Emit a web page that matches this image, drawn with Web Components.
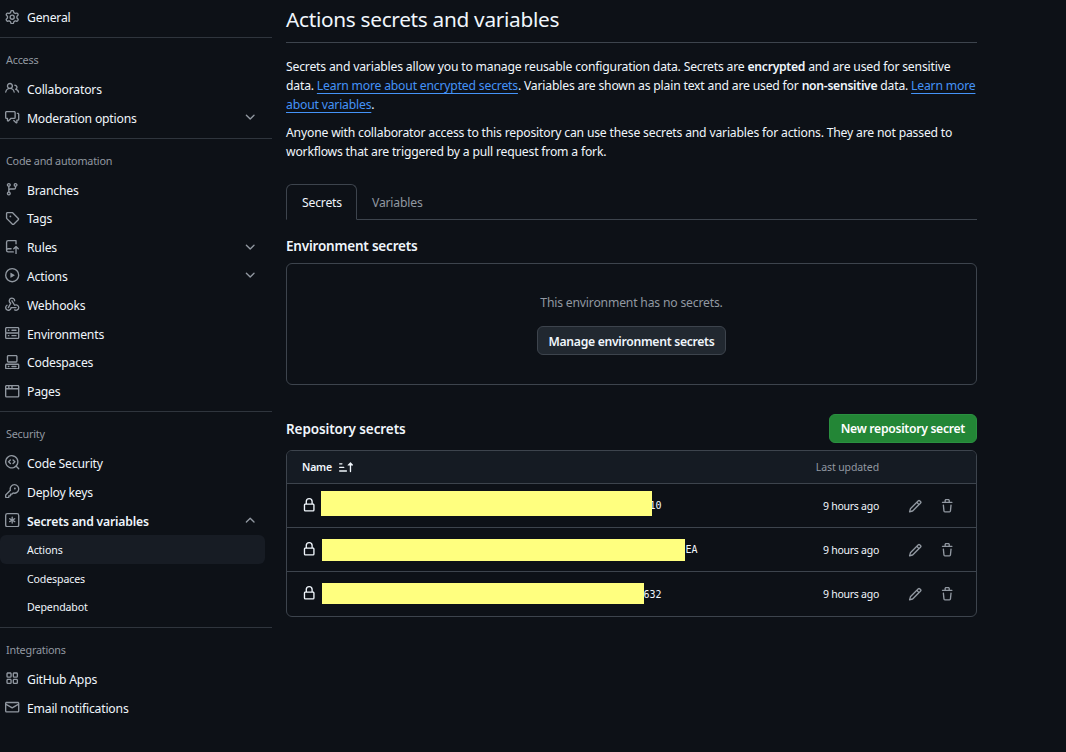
<!DOCTYPE html>
<html lang="en"><head><meta charset="utf-8"><title>Actions secrets and variables</title>
<style>
html,body{margin:0;padding:0;background:#0d1117;color:#f0f6fc;font-family:"Noto Sans","Liberation Sans",sans-serif;font-size:12.2px}
body{overflow:hidden}
</style></head><body>
<settings-page>
  <settings-nav slot="nav">
    <nav-item icon="gear">General</nav-item>
    <nav-heading>Access</nav-heading>
    <nav-item icon="people">Collaborators</nav-item>
    <nav-item icon="comment" chevron="down">Moderation options</nav-item>
    <nav-heading>Code and automation</nav-heading>
    <nav-item icon="branch">Branches</nav-item>
    <nav-item icon="tag">Tags</nav-item>
    <nav-item icon="push" chevron="down">Rules</nav-item>
    <nav-item icon="play" chevron="down">Actions</nav-item>
    <nav-item icon="webhook">Webhooks</nav-item>
    <nav-item icon="server">Environments</nav-item>
    <nav-item icon="codespaces">Codespaces</nav-item>
    <nav-item icon="browser">Pages</nav-item>
    <nav-heading>Security</nav-heading>
    <nav-item icon="codescan">Code Security</nav-item>
    <nav-item icon="key">Deploy keys</nav-item>
    <nav-item icon="asterisk" chevron="up" strong>Secrets and variables</nav-item>
    <nav-item sub active>Actions</nav-item>
    <nav-item sub>Codespaces</nav-item>
    <nav-item sub>Dependabot</nav-item>
    <nav-heading>Integrations</nav-heading>
    <nav-item icon="apps">GitHub Apps</nav-item>
    <nav-item icon="mail">Email notifications</nav-item>
  </settings-nav>
  <secrets-intro></secrets-intro>
  <tab-strip></tab-strip>
  <env-secrets></env-secrets>
  <repo-secrets>
    <secret-row width="331" height="25" offset="7" mono="10" gap="5" pull="3" lift="0"></secret-row>
    <secret-row width="363" height="22" offset="11" mono="EA" gap="6" pull="0" lift="0"></secret-row>
    <secret-row width="322" height="21" offset="11" mono="632" gap="6" pull="1" lift="2"></secret-row>
  </repo-secrets>
</settings-page>
<script>
const ICONS={
gear:'M8 0a8.2 8.2 0 0 1 .701.031C9.444.095 9.99.645 10.16 1.29l.288 1.107c.018.066.079.158.212.224.231.114.454.243.668.386.123.082.233.09.299.071l1.103-.303c.644-.176 1.392.021 1.82.63.27.385.506.792.704 1.218.315.675.111 1.422-.364 1.891l-.814.806c-.049.048-.098.147-.088.294.016.257.016.515 0 .772-.01.147.038.246.088.294l.814.806c.475.469.679 1.216.364 1.891a7.977 7.977 0 0 1-.704 1.217c-.428.61-1.176.807-1.82.63l-1.102-.302c-.067-.019-.177-.011-.3.071a5.909 5.909 0 0 1-.668.386c-.133.066-.194.158-.211.224l-.29 1.106c-.168.646-.715 1.196-1.458 1.26a8.006 8.006 0 0 1-1.402 0c-.743-.064-1.289-.614-1.458-1.26l-.289-1.106c-.018-.066-.079-.158-.212-.224a5.738 5.738 0 0 1-.668-.386c-.123-.082-.233-.09-.299-.071l-1.103.303c-.644.176-1.392-.021-1.82-.63a8.12 8.12 0 0 1-.704-1.218c-.315-.675-.111-1.422.363-1.891l.815-.806c.05-.048.098-.147.088-.294a6.214 6.214 0 0 1 0-.772c.01-.147-.038-.246-.088-.294l-.815-.806C.635 6.045.431 5.298.746 4.623a7.92 7.92 0 0 1 .704-1.217c.428-.61 1.176-.807 1.82-.63l1.102.302c.067.019.177.011.3-.071.214-.143.437-.272.668-.386.133-.066.194-.158.211-.224l.29-1.106C6.009.645 6.556.095 7.299.03 7.53.01 7.764 0 8 0Zm-.571 1.525c-.036.003-.108.036-.137.146l-.289 1.105c-.147.561-.549.967-.998 1.189-.173.086-.34.183-.5.29-.417.278-.97.423-1.529.27l-1.103-.303c-.109-.03-.175.016-.195.045-.22.312-.412.644-.573.99-.014.031-.021.11.059.19l.815.806c.411.406.562.957.53 1.456a4.709 4.709 0 0 0 0 .582c.032.499-.119 1.05-.53 1.456l-.815.806c-.081.08-.073.159-.059.19.162.346.353.677.573.989.02.03.085.076.195.046l1.102-.303c.56-.153 1.113-.008 1.53.27.161.107.328.204.501.29.447.222.85.629.997 1.189l.289 1.105c.029.109.101.143.137.146a6.6 6.6 0 0 0 1.142 0c.036-.003.108-.036.137-.146l.289-1.105c.147-.561.549-.967.998-1.189.173-.086.34-.183.5-.29.417-.278.97-.423 1.529-.27l1.103.303c.109.029.175-.016.195-.045.22-.313.411-.644.573-.99.014-.031.021-.11-.059-.19l-.815-.806c-.411-.406-.562-.957-.53-1.456a4.709 4.709 0 0 0 0-.582c-.032-.499.119-1.05.53-1.456l.815-.806c.081-.08.073-.159.059-.19a6.464 6.464 0 0 0-.573-.989c-.02-.03-.085-.076-.195-.046l-1.102.303c-.56.153-1.113.008-1.53-.27a4.44 4.44 0 0 0-.501-.29c-.447-.222-.85-.629-.997-1.189l-.289-1.105c-.029-.11-.101-.143-.137-.146a6.6 6.6 0 0 0-1.142 0ZM11 8a3 3 0 1 1-6 0 3 3 0 0 1 6 0ZM9.5 8a1.5 1.5 0 1 0-3.001.001A1.5 1.5 0 0 0 9.5 8Z',
people:'M2 5.5a3.5 3.5 0 1 1 5.898 2.549 5.508 5.508 0 0 1 3.034 4.084.75.75 0 1 1-1.482.235 4 4 0 0 0-7.9 0 .75.75 0 0 1-1.482-.236A5.507 5.507 0 0 1 3.102 8.05 3.493 3.493 0 0 1 2 5.5ZM11 4a3.001 3.001 0 0 1 2.22 5.018 5.01 5.01 0 0 1 2.56 3.012.749.749 0 0 1-.885.954.752.752 0 0 1-.549-.514 3.507 3.507 0 0 0-2.522-2.372.75.75 0 0 1-.574-.73v-.352a.75.75 0 0 1 .416-.672A1.5 1.5 0 0 0 11 5.5.75.75 0 0 1 11 4Zm-5.5-.5a2 2 0 1 0-.001 3.999A2 2 0 0 0 5.5 3.5Z',
comment:'M1.75 1h8.5c.966 0 1.75.784 1.75 1.75v5.5A1.75 1.75 0 0 1 10.25 10H7.061l-2.574 2.573A1.458 1.458 0 0 1 2 11.543V10h-.25A1.75 1.75 0 0 1 0 8.25v-5.5C0 1.784.784 1 1.75 1ZM1.5 2.75v5.5c0 .138.112.25.25.25h1a.75.75 0 0 1 .75.75v2.19l2.72-2.72a.749.749 0 0 1 .53-.22h3.5a.25.25 0 0 0 .25-.25v-5.5a.25.25 0 0 0-.25-.25h-8.5a.25.25 0 0 0-.25.25Zm13 2a.25.25 0 0 0-.25-.25h-.5a.75.75 0 0 1 0-1.5h.5c.966 0 1.75.784 1.75 1.75v5.5A1.75 1.75 0 0 1 14.25 12H14v1.543a1.458 1.458 0 0 1-2.487 1.03L9.22 12.28a.749.749 0 0 1 .326-1.275.749.749 0 0 1 .734.215l2.22 2.22v-2.19a.75.75 0 0 1 .75-.75h1a.25.25 0 0 0 .25-.25Z',
branch:'M9.5 3.25a2.25 2.25 0 1 1 3 2.122V6A2.5 2.5 0 0 1 10 8.5H6a1 1 0 0 0-1 1v1.128a2.251 2.251 0 1 1-1.5 0V5.372a2.25 2.25 0 1 1 1.5 0v1.836A2.493 2.493 0 0 1 6 7h4a1 1 0 0 0 1-1v-.628A2.25 2.25 0 0 1 9.5 3.25Zm-6 0a.75.75 0 1 0 1.5 0 .75.75 0 0 0-1.5 0Zm8.25-.75a.75.75 0 1 0 0 1.5.75.75 0 0 0 0-1.5ZM4.25 12a.75.75 0 1 0 0 1.5.75.75 0 0 0 0-1.5Z',
tag:'M1 7.775V2.75C1 1.784 1.784 1 2.75 1h5.025c.464 0 .91.184 1.238.513l6.25 6.25a1.75 1.75 0 0 1 0 2.474l-5.026 5.026a1.75 1.75 0 0 1-2.474 0l-6.25-6.25A1.752 1.752 0 0 1 1 7.775Zm1.5 0c0 .066.026.13.073.177l6.25 6.25a.25.25 0 0 0 .354 0l5.025-5.025a.25.25 0 0 0 0-.354l-6.25-6.25a.25.25 0 0 0-.177-.073H2.75a.25.25 0 0 0-.25.25ZM6 5a1 1 0 1 1 0 2 1 1 0 0 1 0-2Z',
push:'M1 2.5A2.5 2.5 0 0 1 3.5 0h8.75a.75.75 0 0 1 .75.75v3.5a.75.75 0 0 1-1.5 0V1.5h-8a1 1 0 0 0-1 1v6.708A2.492 2.492 0 0 1 3.5 9h3.25a.75.75 0 0 1 0 1.5H3.5a1 1 0 0 0 0 2h5.75a.75.75 0 0 1 0 1.5H3.5A2.5 2.5 0 0 1 1 11.5Zm13.23 7.79h-.001l-1.224-1.224v6.184a.75.75 0 0 1-1.5 0V9.066L10.28 10.29a.75.75 0 0 1-1.06-1.061l2.505-2.504a.75.75 0 0 1 1.06 0L15.29 9.23a.751.751 0 0 1-.018 1.042.751.751 0 0 1-1.042.018Z',
play:'M8 0a8 8 0 1 1 0 16A8 8 0 0 1 8 0ZM1.5 8a6.5 6.5 0 1 0 13 0 6.5 6.5 0 0 0-13 0Zm4.879-2.773 4.264 2.559a.25.25 0 0 1 0 .428l-4.264 2.559A.25.25 0 0 1 6 10.559V5.442a.25.25 0 0 1 .379-.215Z',
webhook:'M5.5 4.25a2.25 2.25 0 0 1 4.5 0 .75.75 0 0 0 1.5 0 3.75 3.75 0 1 0-6.14 2.889l-2.272 4.258a.75.75 0 0 0 1.324.706L7 7.25a.75.75 0 0 0-.309-1.015A2.25 2.25 0 0 1 5.5 4.25ZM7.364 3.607a.75.75 0 0 1 1.03.257l2.608 4.349a3.75 3.75 0 1 1-.628 6.785.75.75 0 0 1 .752-1.299 2.25 2.25 0 1 0-.033-3.88.75.75 0 0 1-1.03-.256L7.107 4.636a.75.75 0 0 1 .257-1.03ZM2.9 8.776A.75.75 0 0 1 2.625 9.8 2.25 2.25 0 1 0 6 11.75a.75.75 0 0 1 .75-.751h5.5a.75.75 0 0 1 0 1.5H7.425a3.751 3.751 0 1 1-5.55-3.998.75.75 0 0 1 1.024.274Z',
server:'M1.75 1h12.5c.966 0 1.75.784 1.75 1.75v4c0 .372-.116.717-.314 1 .198.283.314.628.314 1v4a1.75 1.75 0 0 1-1.75 1.75H1.75A1.75 1.75 0 0 1 0 12.75v-4c0-.372.116-.717.314-1a1.739 1.739 0 0 1-.314-1v-4C0 1.784.784 1 1.75 1ZM1.5 2.75v4c0 .138.112.25.25.25h12.5a.25.25 0 0 0 .25-.25v-4a.25.25 0 0 0-.25-.25H1.75a.25.25 0 0 0-.25.25Zm.25 5.75a.25.25 0 0 0-.25.25v4c0 .138.112.25.25.25h12.5a.25.25 0 0 0 .25-.25v-4a.25.25 0 0 0-.25-.25ZM7 4.75A.75.75 0 0 1 7.75 4h4.5a.75.75 0 0 1 0 1.5h-4.5A.75.75 0 0 1 7 4.75ZM7.75 10h4.5a.75.75 0 0 1 0 1.5h-4.5a.75.75 0 0 1 0-1.5ZM3 4.75A.75.75 0 0 1 3.75 4h.5a.75.75 0 0 1 0 1.5h-.5A.75.75 0 0 1 3 4.75ZM3.75 10h.5a.75.75 0 0 1 0 1.5h-.5a.75.75 0 0 1 0-1.5Z',
codespaces:'M0 11.25c0-.966.784-1.75 1.75-1.75h12.5c.966 0 1.75.784 1.75 1.75v3A1.75 1.75 0 0 1 14.25 16H1.75A1.75 1.75 0 0 1 0 14.25Zm2-9.5C2 .784 2.784 0 3.75 0h8.5C13.216 0 14 .784 14 1.75v5a1.75 1.75 0 0 1-1.75 1.75h-8.5A1.75 1.75 0 0 1 2 6.75Zm1.75-.25a.25.25 0 0 0-.25.25v5c0 .138.112.25.25.25h8.5a.25.25 0 0 0 .25-.25v-5a.25.25 0 0 0-.25-.25Zm-2 9.5a.25.25 0 0 0-.25.25v3c0 .138.112.25.25.25h12.5a.25.25 0 0 0 .25-.25v-3a.25.25 0 0 0-.25-.25ZM7 12.75a.75.75 0 0 1 .75-.75h4.5a.75.75 0 0 1 0 1.5h-4.5a.75.75 0 0 1-.75-.75Zm-4 0a.75.75 0 0 1 .75-.75h.5a.75.75 0 0 1 0 1.5h-.5a.75.75 0 0 1-.75-.75Z',
browser:'M0 2.75C0 1.784.784 1 1.75 1h12.5c.966 0 1.75.784 1.75 1.75v10.5A1.75 1.75 0 0 1 14.25 15H1.75A1.75 1.75 0 0 1 0 13.25ZM14.5 6h-13v7.25c0 .138.112.25.25.25h12.5a.25.25 0 0 0 .25-.25Zm-6-3.5v2h6V2.75a.25.25 0 0 0-.25-.25ZM5 2.5v2h2v-2Zm-3.25 0a.25.25 0 0 0-.25.25V4.5h2v-2Z',
codescan:'M8.47 4.97a.75.75 0 0 0 0 1.06L9.94 7.5 8.47 8.97a.75.75 0 1 0 1.06 1.06l2-2a.75.75 0 0 0 0-1.06l-2-2a.75.75 0 0 0-1.06 0ZM6.53 6.03a.75.75 0 0 0-1.06-1.06l-2 2a.75.75 0 0 0 0 1.06l2 2a.75.75 0 1 0 1.06-1.06L5.06 7.5l1.47-1.47ZM12.246 13.307a7.501 7.501 0 1 1 1.06-1.06l2.474 2.473a.749.749 0 0 1-.326 1.275.749.749 0 0 1-.734-.215ZM1.5 7.5a6.002 6.002 0 0 0 3.5 5.45 6 6 0 1 0-3.5-5.45Z',
key:'M10.5 0a5.499 5.499 0 1 1-1.288 10.848l-.932.932a.749.749 0 0 1-.53.22H7v.75a.749.749 0 0 1-.22.53l-.5.5a.749.749 0 0 1-.53.22H5v.75a.749.749 0 0 1-.22.53l-.5.5a.749.749 0 0 1-.53.22h-2A1.75 1.75 0 0 1 0 14.25v-2c0-.199.079-.389.22-.53l4.932-4.932A5.5 5.5 0 0 1 10.5 0Zm-4 5.5c-.001.431.069.86.205 1.269a.75.75 0 0 1-.181.768L1.5 12.56v1.69c0 .138.112.25.25.25h1.69l.06-.06v-1.19a.75.75 0 0 1 .75-.75h1.19l.06-.06v-1.19a.75.75 0 0 1 .75-.75h1.19l1.023-1.025a.75.75 0 0 1 .768-.18A4 4 0 1 0 6.5 5.5ZM11 6a1 1 0 1 1 0-2 1 1 0 0 1 0 2Z',
asterisk:'M0 2.75A2.75 2.75 0 0 1 2.75 0h10.5A2.75 2.75 0 0 1 16 2.75v10.5A2.75 2.75 0 0 1 13.25 16H2.75A2.75 2.75 0 0 1 0 13.25ZM2.75 1.5c-.69 0-1.25.56-1.25 1.25v10.5c0 .69.56 1.25 1.25 1.25h10.5c.69 0 1.25-.56 1.25-1.25V2.75c0-.69-.56-1.25-1.25-1.25ZM8 4a.75.75 0 0 1 .75.75V6.7l1.69-.975a.75.75 0 0 1 .75 1.3L9.5 8l1.69.976a.75.75 0 0 1-.75 1.298L8.75 9.3v1.951a.75.75 0 0 1-1.5 0V9.299l-1.69.976a.75.75 0 0 1-.75-1.3L6.5 8l-1.69-.975a.75.75 0 0 1 .75-1.3l1.69.976V4.75A.75.75 0 0 1 8 4Z',
apps:'M1.5 3.25c0-.966.784-1.75 1.75-1.75h2.5c.966 0 1.75.784 1.75 1.75v2.5A1.75 1.75 0 0 1 5.75 7.5h-2.5A1.75 1.75 0 0 1 1.5 5.75Zm7 0c0-.966.784-1.75 1.75-1.75h2.5c.966 0 1.75.784 1.75 1.75v2.5a1.75 1.75 0 0 1-1.75 1.75h-2.5A1.75 1.75 0 0 1 8.5 5.75Zm-7 7c0-.966.784-1.75 1.75-1.75h2.5c.966 0 1.75.784 1.75 1.75v2.5a1.75 1.75 0 0 1-1.75 1.75h-2.5a1.75 1.75 0 0 1-1.75-1.75Zm7 0c0-.966.784-1.75 1.75-1.75h2.5c.966 0 1.75.784 1.75 1.75v2.5a1.75 1.75 0 0 1-1.75 1.75h-2.5a1.75 1.75 0 0 1-1.75-1.75ZM3.25 3a.25.25 0 0 0-.25.25v2.5c0 .138.112.25.25.25h2.5A.25.25 0 0 0 6 5.75v-2.5A.25.25 0 0 0 5.75 3Zm7 0a.25.25 0 0 0-.25.25v2.5c0 .138.112.25.25.25h2.5a.25.25 0 0 0 .25-.25v-2.5a.25.25 0 0 0-.25-.25ZM3 10.25v2.5c0 .138.112.25.25.25h2.5a.25.25 0 0 0 .25-.25v-2.5a.25.25 0 0 0-.25-.25h-2.5a.25.25 0 0 0-.25.25Zm7.25-.25a.25.25 0 0 0-.25.25v2.5c0 .138.112.25.25.25h2.5a.25.25 0 0 0 .25-.25v-2.5a.25.25 0 0 0-.25-.25Z',
mail:'M1.75 2h12.5c.966 0 1.75.784 1.75 1.75v8.5A1.75 1.75 0 0 1 14.25 14H1.75A1.75 1.75 0 0 1 0 12.25v-8.5C0 2.784.784 2 1.75 2ZM1.5 12.251c0 .138.112.25.25.25h12.5a.25.25 0 0 0 .25-.25V5.809L8.38 9.397a.75.75 0 0 1-.76 0L1.5 5.809v6.442Zm13-8.181v-.32a.25.25 0 0 0-.25-.25H1.75a.25.25 0 0 0-.25.25v.32L8 7.88Z',
down:'M12.78 5.22a.749.749 0 0 1 0 1.06l-4.25 4.25a.749.749 0 0 1-1.06 0L3.22 6.28a.749.749 0 1 1 1.06-1.06L8 8.939l3.72-3.719a.749.749 0 0 1 1.06 0Z',
up:'M3.22 10.53a.749.749 0 0 1 0-1.06l4.25-4.25a.749.749 0 0 1 1.06 0l4.25 4.25a.749.749 0 1 1-1.06 1.06L8 6.811 4.28 10.53a.749.749 0 0 1-1.06 0Z',
lock:'M4 4a4 4 0 0 1 8 0v2h.25c.966 0 1.75.784 1.75 1.75v5.5A1.75 1.75 0 0 1 12.25 15h-8.5A1.75 1.75 0 0 1 2 13.25v-5.5C2 6.784 2.784 6 3.75 6H4Zm8.25 3.5h-8.5a.25.25 0 0 0-.25.25v5.5c0 .138.112.25.25.25h8.5a.25.25 0 0 0 .25-.25v-5.5a.25.25 0 0 0-.25-.25ZM10.5 6V4a2.5 2.5 0 1 0-5 0v2Z',
pencil:'M11.013 1.427a1.75 1.75 0 0 1 2.474 0l1.086 1.086a1.75 1.75 0 0 1 0 2.474l-8.61 8.61c-.21.21-.47.364-.756.445l-3.251.93a.75.75 0 0 1-.927-.928l.929-3.25c.081-.286.235-.547.445-.758l8.61-8.61Zm.176 4.823L9.75 4.81l-6.286 6.287a.253.253 0 0 0-.064.108l-.558 1.953 1.953-.558a.253.253 0 0 0 .108-.064Zm1.238-3.763a.25.25 0 0 0-.354 0L10.811 3.75l1.439 1.44 1.263-1.263a.25.25 0 0 0 0-.354Z',
trash:'M11 1.75V3h2.25a.75.75 0 0 1 0 1.5H2.75a.75.75 0 0 1 0-1.5H5V1.75C5 .784 5.784 0 6.75 0h2.5C10.216 0 11 .784 11 1.75ZM4.496 6.675l.66 6.6a.25.25 0 0 0 .249.225h5.19a.25.25 0 0 0 .249-.225l.66-6.6a.75.75 0 0 1 1.492.149l-.66 6.6A1.748 1.748 0 0 1 10.595 15h-5.19a1.75 1.75 0 0 1-1.741-1.575l-.66-6.6a.75.75 0 1 1 1.492-.15ZM6.5 1.75V3h3V1.75a.25.25 0 0 0-.25-.25h-2.5a.25.25 0 0 0-.25.25Z',
sort:'m12.927 2.573 3 3A.25.25 0 0 1 15.75 6H13.5v6.75a.75.75 0 0 1-1.5 0V6H9.75a.25.25 0 0 1-.177-.427l3-3a.25.25 0 0 1 .354 0ZM0 12.25a.75.75 0 0 1 .75-.75h7.5a.75.75 0 0 1 0 1.5H.75a.75.75 0 0 1-.75-.75Zm0-4a.75.75 0 0 1 .75-.75h4.5a.75.75 0 0 1 0 1.5H.75A.75.75 0 0 1 0 8.25Zm0-4a.75.75 0 0 1 .75-.75h2.5a.75.75 0 0 1 0 1.5H.75A.75.75 0 0 1 0 4.25Z'
};
const UI='"Noto Sans","Liberation Sans",sans-serif';
const BASE=`:host{box-sizing:border-box;font-family:${UI}} *{box-sizing:border-box}`;
const LS='-.193px';
class El extends HTMLElement{
  connectedCallback(){ if(this.shadowRoot) return; this.attachShadow({mode:'open'}).innerHTML=`<style>${BASE}${this.css()}</style>${this.html()}`; }
  css(){return ''} html(){return '<slot></slot>'}
}
const def=(n,css,html)=>customElements.define(n,class extends El{css(){return css} html(){return typeof html==='function'?html(this):html}});

def('gh-icon',`:host{display:inline-flex;width:var(--s,14.4px);height:var(--s,14.4px);flex:none;color:var(--c,#9198a1)} svg{display:block;width:100%;height:100%;fill:currentColor}`,
  h=>`<svg viewBox="0 0 16 16" aria-hidden="true"><path d="${ICONS[h.getAttribute('name')]}"/></svg>`);

def('settings-page',`:host{display:grid;grid-template-columns:272px 691px;column-gap:14px;align-items:start;width:1066px}
  .nav{grid-column:1;grid-row:1} .main{grid-column:2;grid-row:1;min-width:0}`,
  `<div class="nav"><slot name="nav"></slot></div><div class="main"><slot></slot></div>`);

def('settings-nav',`:host{display:block;padding-top:3.4px}`,`<slot></slot>`);

def('nav-heading',`:host{display:block;margin-top:5.2px;border-top:1px solid #2f353d;padding:12.6px 6px 6.2px;font-size:10.8px;line-height:18px;color:#9198a1;letter-spacing:-.02em}`,`<slot></slot>`);

def('nav-item',`:host{display:flex;align-items:center;height:28.8px;width:265px;padding:0 7.2px 0 5.4px;border-radius:6px;font-size:12.2px;color:#f0f6fc;letter-spacing:${LS}}
  :host([sub]){padding-left:27px;font-size:10.6px;letter-spacing:-.12px}
  :host([active]){background:#171c24}
  :host([strong]){font-weight:600}
  gh-icon{margin-top:-2px}
  .t{flex:1;min-width:0;white-space:nowrap;margin-left:7.2px}
  :host([sub]) .t{margin-left:0}`,
  h=>{const i=h.getAttribute('icon'),c=h.getAttribute('chevron');
    return `${i?`<gh-icon name="${i}"></gh-icon>`:''}<span class="t"><slot></slot></span>${c?`<gh-icon name="${c}"></gh-icon>`:''}`});

def('secrets-intro',`:host{display:block}
  h1{margin:0;height:43px;border-bottom:1px solid #3d444d;font-size:20.8px;font-weight:400;line-height:39px;white-space:nowrap;letter-spacing:-.3px}
  p{margin:0 0 9px;font-size:12.2px;line-height:19px;white-space:nowrap;letter-spacing:${LS}}
  p:first-of-type{margin-top:13.5px}
  a{color:#4493f8;text-decoration:underline;text-underline-offset:2.6px}
  b{font-weight:600;letter-spacing:-.3px}`,
  `<h1>Actions secrets and variables</h1>
  <p>Secrets and variables allow you to manage reusable configuration data. Secrets are <b>encrypted</b> and are used for sensitive<br>data. <a href="#">Learn more about encrypted secrets</a>. Variables are shown as plain text and are used for <b>non-sensitive</b> data. <a href="#">Learn more<br>about variables</a>.</p>
  <p>Anyone with collaborator access to this repository can use these secrets and variables for actions. They are not passed to<br>workflows that are triggered by a pull request from a fork.</p>`);

def('tab-strip',`:host{display:flex;margin-top:23.5px;height:36px;border-bottom:1px solid #3d444d;font-size:12.2px;letter-spacing:${LS}}
  .t{display:flex;align-items:center;height:36px;padding:0 15px;white-space:nowrap}
  .on{width:71px;border:1px solid #3d444d;border-bottom-color:#0d1117;border-radius:6px 6px 0 0;color:#f0f6fc;padding:0 0 0 15px}
  .off{color:#9198a1}`,
  `<div class="t on">Secrets</div><div class="t off">Variables</div>`);

def('env-secrets',`:host{display:block;margin-top:16px}
  h3{margin:0;font-size:13.5px;line-height:20px;font-weight:600;height:27px;letter-spacing:-.015em}
  .box{display:flex;flex-direction:column;align-items:center;height:122px;border:1px solid #3d444d;border-radius:6px;padding-top:29px}
  .m{font-size:12.2px;line-height:20px;color:#9198a1;letter-spacing:${LS}}
  gh-button{margin-top:13px;padding-top:2px}`,
  `<h3>Environment secrets</h3><div class="box"><div class="m">This environment has no secrets.</div><gh-button>Manage environment secrets</gh-button></div>`);

def('gh-button',`:host{display:inline-flex;align-items:center;justify-content:center;height:29px;padding:0 11px;border:1px solid #3d444d;border-radius:6px;background:#212830;color:#f0f6fc;font-size:12.2px;font-weight:600;white-space:nowrap;letter-spacing:-.3px}
  :host([primary]){background:#238636;border-color:#2a9040;color:#fff}`,`<slot></slot>`);

def('repo-secrets',`:host{display:block;margin-top:29px}
  .h{display:flex;align-items:center;justify-content:space-between;height:29px}
  h3{margin:0;font-size:13.5px;font-weight:600;line-height:20px;padding-top:1px;letter-spacing:-.1px}
  .t{margin-top:7px;border:1px solid #3d444d;border-radius:6px;overflow:hidden}
  .th{display:flex;align-items:center;height:33px;background:#151b23;border-bottom:1px solid #3d444d;padding:0 0 0 15px;font-size:10.5px}
  .n{font-weight:600;color:#f0f6fc;margin-right:7px;letter-spacing:-.2px}
  .u{margin-left:auto;margin-right:97px;color:#9198a1;letter-spacing:-.1px}`,
  `<div class="h"><h3>Repository secrets</h3><gh-button primary>New repository secret</gh-button></div>
  <div class="t"><div class="th"><span class="n">Name</span><gh-icon name="sort" style="--c:#f0f6fc"></gh-icon><span class="u">Last updated</span></div><slot></slot></div>`);

def('secret-row',`:host{display:flex;align-items:center;height:44px;border-bottom:1px solid #3d444d;padding-left:15px;font-size:10.5px}
  :host(:last-child){border-bottom:0}
  :host(:last-child) .i{margin-top:1px}
  .r{align-self:flex-start;flex:none;background:#ffff7f;position:relative;z-index:1}
  .s{font-family:"DejaVu Sans Mono",monospace;font-size:10px;color:#f0f6fc;position:relative}
  .a{margin-left:auto;margin-right:28.6px;white-space:nowrap;letter-spacing:-.25px}
  .i{display:flex;gap:17.6px;margin:2px 22px 0 0}`,
  h=>{const a=k=>h.getAttribute(k);
   return `<gh-icon name="lock" style="--c:#f0f6fc;margin-right:${a('gap')}px;margin-top:-${a('lift')}px"></gh-icon><span class="r" style="width:${a('width')}px;height:${a('height')}px;margin-top:${a('offset')}px"></span><span class="s" style="margin-left:-${a('pull')}px">${a('mono')}</span><span class="a">9 hours ago</span><span class="i"><gh-icon name="pencil"></gh-icon><gh-icon name="trash"></gh-icon></span>`});
</script>
</body></html>
